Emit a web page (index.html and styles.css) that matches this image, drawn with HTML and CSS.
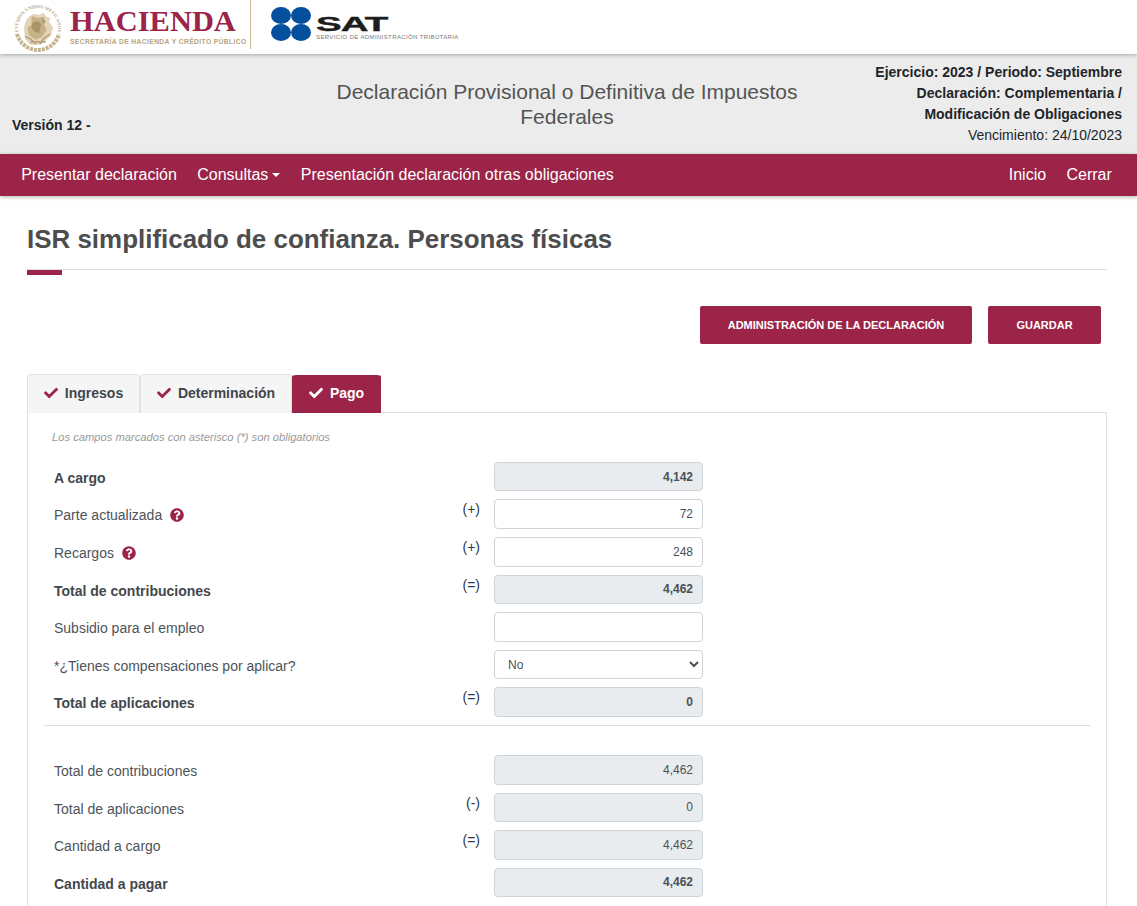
FILE: index.html
```html
<!DOCTYPE html>
<html lang="es">
<head>
<meta charset="utf-8">
<title>Declaración</title>
<link rel="stylesheet" href="styles.css">
</head>
<body>
<header class="brand">
  <svg class="emblem" viewBox="0 0 50 50" width="50" height="50">
    <defs><path id="ring" d="M6.500 33A20.100 20.100 0 1 1 43.500 33"/></defs>
    <text class="emblem-text"><textPath href="#ring" startOffset="50%" text-anchor="middle">ESTADOS UNIDOS MEXICANOS</textPath></text>
    <path d="M4 31q3 10 12 14 9 4 18 0 9-4 12-14" fill="none" stroke="#c7b48e" stroke-width="4" stroke-dasharray="3 1"/>
    <g class="eagle">
      <path d="M12 24q2-9 9-12l5 1 4-2 3 4 4 1-2 3 4 6-2 7-5 5-6 4h-8l-5-6z" fill="#e3d5b9"/>
      <path d="M19 14l6 2 6-1-1 5 3 7-5 7-5 2-6-4-2-7 4-3z" fill="#c6b188"/>
      <path d="M20 20l5-1 3 3-2 8-5-2-2-4zM29 16l3 3-2 3z" fill="#a8936a"/>
      <path d="M13 33q6 2 10 7M36 31q-6 3-9 9M18 38h14" fill="none" stroke="#b7a47d" stroke-width="1.500"/>
    </g>
  </svg>
  <div class="hacienda">
    <div class="hacienda-name">HACIENDA</div>
    <div class="hacienda-sub">SECRETARÍA DE HACIENDA Y CRÉDITO PÚBLICO</div>
  </div>
  <div class="brand-divider"></div>
  <svg class="sat-mark" viewBox="0 0 40 34" width="40" height="34">
    <ellipse cx="10" cy="8.500" rx="10" ry="8.500" fill="#04509c"/>
    <ellipse cx="30" cy="8.500" rx="10" ry="8.500" fill="#04509c"/>
    <ellipse cx="10" cy="25.500" rx="10" ry="8.500" fill="#04509c"/>
    <ellipse cx="30" cy="25.500" rx="10" ry="8.500" fill="#04509c"/>
  </svg>
  <div class="sat">
    <div class="sat-name">SAT</div>
    <div class="sat-sub">SERVICIO DE ADMINISTRACIÓN TRIBUTARIA</div>
  </div>
</header>

<section class="band">
  <div class="version">Versión 12 -</div>
  <h1 class="band-title">Declaración Provisional o Definitiva de Impuestos Federales</h1>
  <div class="band-info">
    <div class="strong">Ejercicio: 2023 / Periodo: Septiembre</div>
    <div class="strong">Declaración: Complementaria /</div>
    <div class="strong">Modificación de Obligaciones</div>
    <div>Vencimiento: 24/10/2023</div>
  </div>
</section>

<nav class="nav">
  <a>Presentar declaración</a>
  <a class="caret">Consultas</a>
  <a>Presentación declaración otras obligaciones</a>
  <span class="nav-spacer"></span>
  <a>Inicio</a>
  <a>Cerrar</a>
</nav>

<main class="main">
  <h2 class="page-title">ISR simplificado de confianza. Personas físicas</h2>
  <div class="actions">
    <button class="btn btn-admin">ADMINISTRACIÓN DE LA DECLARACIÓN</button>
    <button class="btn btn-save">GUARDAR</button>
  </div>

  <div class="tabs">
    <div class="tab tab-1"><svg class="check" viewBox="0 0 512 512"><path d="M173.900 439.400L7.500 273c-10-10-10-26.200 0-36.200l36.200-36.200c10-10 26.200-10 36.200 0L192 312.700 432.100 72.600c10-10 26.200-10 36.200 0l36.200 36.200c10 10 10 26.200 0 36.200L210.100 439.400c-10 10-26.200 10-36.200 0z"/></svg>Ingresos</div>
    <div class="tab tab-2"><svg class="check" viewBox="0 0 512 512"><path d="M173.900 439.400L7.500 273c-10-10-10-26.200 0-36.200l36.200-36.200c10-10 26.200-10 36.200 0L192 312.700 432.100 72.600c10-10 26.200-10 36.200 0l36.200 36.200c10 10 10 26.200 0 36.200L210.100 439.400c-10 10-26.200 10-36.200 0z"/></svg>Determinación</div>
    <div class="tab tab-active"><svg class="check" viewBox="0 0 512 512"><path d="M173.900 439.400L7.500 273c-10-10-10-26.200 0-36.200l36.200-36.200c10-10 26.200-10 36.200 0L192 312.700 432.100 72.600c10-10 26.200-10 36.200 0l36.200 36.200c10 10 10 26.200 0 36.200L210.100 439.400c-10 10-26.200 10-36.200 0z"/></svg>Pago</div>
  </div>

  <div class="panel">
    <p class="note">Los campos marcados con asterisco (*) son obligatorios</p>

    <div class="row"><div class="label bold">A cargo</div><div class="sign"></div><input class="field ro bold" readonly value="4,142"></div>
    <div class="row"><div class="label">Parte actualizada <svg class="help" viewBox="0 0 512 512"><path d="M504 256c0 137-111 248-248 248S8 393 8 256 119 8 256 8s248 111 248 248zM262.700 90c-54.500 0-89.300 23-116.600 63.800-3.500 5.300-2.300 12.400 2.800 16.300l34.700 26.300c5.200 3.900 12.600 3 16.700-2.100 17.900-22.700 30.100-35.800 57.300-35.800 20.400 0 45.700 13.100 45.700 32.900 0 15-12.400 22.700-32.500 34-23.500 13.200-54.600 29.600-54.600 70.500V300c0 6.600 5.400 12 12 12h56c6.600 0 12-5.400 12-12v-1.300c0-28.400 82.900-29.600 82.900-106.400C379 134.500 319 90 262.700 90zM256 337c-25.300 0-45.800 20.500-45.800 45.800 0 25.300 20.500 45.800 45.800 45.800s45.800-20.500 45.800-45.800c0-25.300-20.500-45.800-45.800-45.800z"/></svg></div><div class="sign">(+)</div><input class="field" value="72"></div>
    <div class="row"><div class="label">Recargos <svg class="help" viewBox="0 0 512 512"><path d="M504 256c0 137-111 248-248 248S8 393 8 256 119 8 256 8s248 111 248 248zM262.700 90c-54.500 0-89.300 23-116.600 63.800-3.500 5.300-2.300 12.400 2.800 16.300l34.700 26.300c5.200 3.900 12.600 3 16.700-2.100 17.900-22.700 30.100-35.800 57.300-35.800 20.400 0 45.700 13.100 45.700 32.900 0 15-12.400 22.700-32.500 34-23.500 13.200-54.600 29.600-54.600 70.500V300c0 6.600 5.400 12 12 12h56c6.600 0 12-5.400 12-12v-1.300c0-28.400 82.900-29.600 82.900-106.400C379 134.500 319 90 262.700 90zM256 337c-25.300 0-45.800 20.500-45.800 45.800 0 25.300 20.500 45.800 45.800 45.800s45.800-20.500 45.800-45.800c0-25.300-20.500-45.800-45.800-45.800z"/></svg></div><div class="sign">(+)</div><input class="field" value="248"></div>
    <div class="row"><div class="label bold">Total de contribuciones</div><div class="sign">(=)</div><input class="field ro bold" readonly value="4,462"></div>
    <div class="row"><div class="label">Subsidio para el empleo</div><div class="sign"></div><input class="field" value=""></div>
    <div class="row"><div class="label">*¿Tienes compensaciones por aplicar?</div><div class="sign"></div><select class="field select"><option>No</option></select></div>
    <div class="row"><div class="label bold">Total de aplicaciones</div><div class="sign">(=)</div><input class="field ro bold" readonly value="0"></div>
    <hr class="divider">
    <div class="row"><div class="label">Total de contribuciones</div><div class="sign"></div><input class="field ro" readonly value="4,462"></div>
    <div class="row"><div class="label">Total de aplicaciones</div><div class="sign">(-)</div><input class="field ro" readonly value="0"></div>
    <div class="row"><div class="label">Cantidad a cargo</div><div class="sign">(=)</div><input class="field ro" readonly value="4,462"></div>
    <div class="row"><div class="label bold">Cantidad a pagar</div><div class="sign"></div><input class="field ro bold" readonly value="4,462"></div>
  </div>
</main>
</body>
</html>
```
FILE: styles.css
```css
* { box-sizing: border-box; }
html, body { height: 906px; overflow: hidden; }
body { margin: 0; background: #fff; color: #495057; font-family: "Liberation Sans", Arial, sans-serif; font-size: 14px; }

.brand { height: 54px; background: #fff; display: flex; align-items: flex-start; box-shadow: 0 1px 4px rgba(0,0,0,.3); position: relative; padding-left: 13px; }
.emblem { margin-top: 3px; flex: none; }
.emblem-text { font-family: "Liberation Serif", serif; font-size: 4.600px; font-weight: bold; fill: #b9a57f; }
.eagle { transform: scale(1.080); transform-origin: 25px 27px; }
.hacienda { margin-left: 7px; width: 180px; flex: none; }
.hacienda-name { font-family: "Liberation Serif", serif; font-size: 30.400px; font-weight: bold; line-height: 28px; margin-top: 7px; color: #9b2448; letter-spacing: .05px; white-space: nowrap; }
.hacienda-sub { font-size: 6.700px; line-height: 8px; margin-top: 3px; font-weight: bold; color: #b9a27c; letter-spacing: .4px; white-space: nowrap; }
.brand-divider { width: 1px; height: 49px; background: #cdb795; flex: none; }
.sat-mark { margin: 7px 0 0 20px; flex: none; }
.sat { margin-left: 5px; }
.sat-name { font-size: 21px; line-height: 20px; margin-top: 14px; font-weight: bold; color: #1d1d1b; transform: scaleX(1.830); transform-origin: left; letter-spacing: -.5px; -webkit-text-stroke: .4px #1d1d1b; }
.sat-sub { font-size: 6px; line-height: 7px; margin-top: 0; color: #77787b; letter-spacing: .38px; white-space: nowrap; }

.band { height: 100px; background: #ececec; display: grid; grid-template-columns: 280px 1fr 280px; align-items: start; padding: 0 15px 0 12px; }
.version { font-size: 14px; font-weight: bold; color: #212529; margin-top: 61px; line-height: 20px; }
.band-title { margin: 25px 0 0; text-align: center; font-size: 21px; font-weight: normal; line-height: 25px; color: #545454; padding: 0 30px; }
.band-info { margin-top: 8px; text-align: right; font-size: 14px; line-height: 21px; color: #212529; }
.strong { font-weight: bold; }

.nav { height: 42px; background: #9b2448; display: flex; align-items: center; padding: 0 15px 0 11px; box-shadow: 0 1px 4px rgba(0,0,0,.3); position: relative; color: #fff; font-size: 16px; }
.nav a { padding: 0 10.200px; line-height: 24px; }
.nav-spacer { flex: 1; }
.caret::after { content: ""; display: inline-block; margin-left: 4px; vertical-align: 3px; border-top: 4.500px solid #fff; border-left: 4.500px solid transparent; border-right: 4.500px solid transparent; }

.main { padding: 0 30px 0 27px; }
.page-title { margin: 0; height: 74px; padding-top: 27px; font-size: 25.950px; line-height: 32px; font-weight: bold; color: #4d4d4d; border-bottom: 1px solid #dedede; position: relative; white-space: nowrap; }
.page-title::after { content: ""; position: absolute; left: 0; bottom: -6px; width: 35px; height: 5px; background: #9b2448; }
.actions { display: flex; justify-content: flex-end; gap: 16px; margin-top: 36px; padding-right: 6px; }
.btn { height: 38px; border: 0; border-radius: 2px; background: #9b2448; color: #fff; font: bold 11px "Liberation Sans", Arial, sans-serif; }
.btn-admin { width: 272px; }
.btn-save { width: 113px; }

.tabs { display: flex; margin-top: 30px; height: 38px; }
.tab { height: 39px; padding-bottom: 2px; display: flex; align-items: center; justify-content: center; background: #f5f5f5; border: 1px solid #dee2e6; border-bottom: 0; border-radius: 4px 4px 0 0; font-size: 14px; font-weight: bold; color: #3f464d; position: relative; z-index: 1; }
.tab-1 { width: 113px; }
.tab-2 { width: 152px; }
.tab-active { width: 89px; background: #9b2448; border-color: #fff #9b2448 #9b2448; color: #fff; }
.check { width: 14px; height: 14px; margin-right: 7px; fill: #9b2448; }
.tab-active .check { fill: #fff; }

.panel { border: 1px solid #dee2e6; border-bottom: 0; height: 500px; padding: 0 16px; }
.note { margin: 0; padding: 17px 0 0 8px; height: 48.900px; font-size: 11.200px; line-height: 14px; font-style: italic; color: #999; }
.row { display: flex; height: 37.550px; }
.label { width: 408px; padding: 6px 0 0 10px; line-height: 20px; color: #4d5359; font-size: 14px; white-space: nowrap; }
.label.bold { color: #43484d; }
.bold { font-weight: bold; }
.help { width: 14px; height: 14px; margin-left: 4px; vertical-align: -2px; fill: #9b2448; }
.sign { width: 42px; padding: 0 14px 0 0; font-size: 14px; line-height: 20px; color: #2b3a4a; text-align: right; }
.field { width: 209px; height: 29.600px; border: 1px solid #ced4da; border-radius: 4px; padding: 0 9px; text-align: right; font: 12px "Liberation Sans", Arial, sans-serif; color: #495057; background: #fff; outline: 0; }
.field.bold { font-weight: bold; }
.ro { background: #e9ecef; }
.select { text-align: left; padding-left: 9px; padding-top: 1px; height: 29px; }
.divider { margin: 0 0 29.300px; border: 0; border-top: 1px solid #dcdcdc; }
```
